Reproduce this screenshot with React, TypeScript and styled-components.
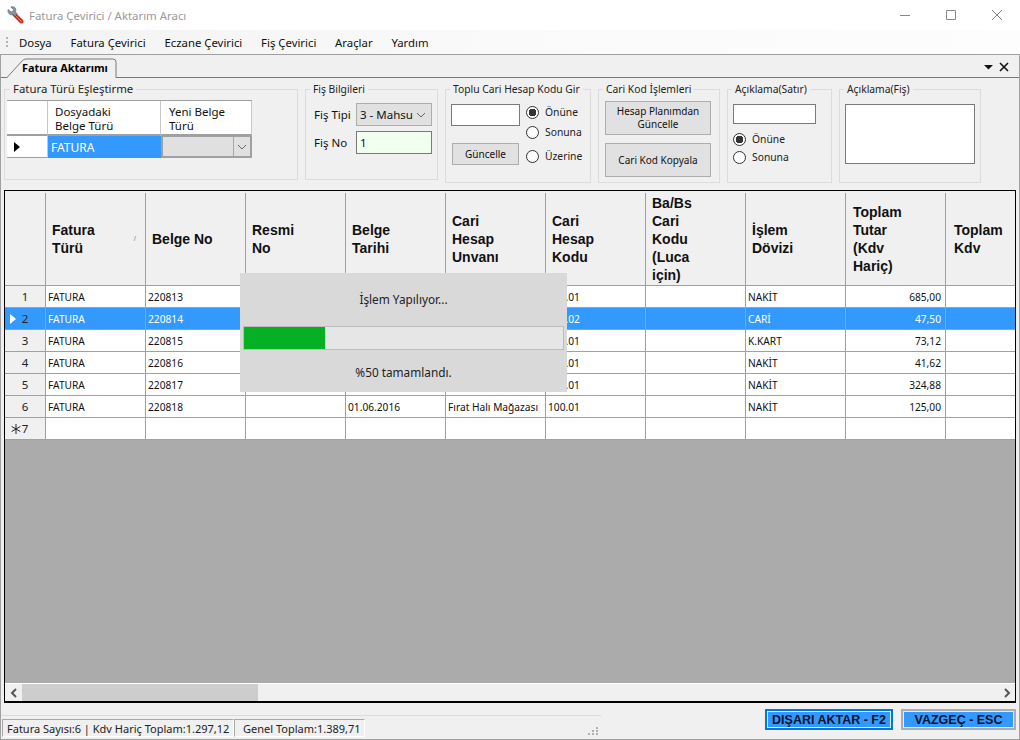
import React from "react";
import styled, { createGlobalStyle } from "styled-components";

const UI_FONT = `"Noto Sans", "Open Sans", sans-serif`;

const Global = createGlobalStyle`
  html, body { margin: 0; padding: 0; background: #f0f0f0; }
  * { box-sizing: border-box; }
`;

const Window = styled.div`
  width: 1020px;
  height: 740px;
  display: flex;
  flex-direction: column;
  background: #f0f0f0;
  border-bottom: 1px solid #a0a0a0;
  font-family: ${UI_FONT};
  font-size: 11px;
  color: #111;
  overflow: hidden;
`;

const TitleBar = styled.div`
  height: 30px;
  flex: none;
  display: flex;
  align-items: center;
  background: #fff;
  padding-left: 7px;
`;

const TitleText = styled.span`
  margin-left: 5px;
  font-size: 11.4px;
  color: #9a9a9a;
  flex: 1;
`;

const WinButtons = styled.div`
  display: flex;
  width: 138px;
`;

const WinButton = styled.svg`
  width: 46px;
  height: 12px;
  stroke: #888;
  fill: none;
`;

const MenuBar = styled.div`
  height: 25px;
  flex: none;
  display: flex;
  align-items: center;
  padding-left: 6px;
  background: linear-gradient(90deg, #f3f3f3, #fbfbfb 60%, #fdfdfd);
  border-bottom: 1px solid #a0a0a0;
`;

const Grip = styled.svg`
  width: 3px;
  height: 11px;
  margin-right: 10px;
  fill: #b4b4b4;
`;

const MenuItem = styled.span`
  font-size: 11.35px;
  margin-right: 18.8px;
  color: #111;
`;

const Body = styled.div`
  flex: 1;
  min-height: 0;
  display: flex;
  flex-direction: column;
  border-left: 1px solid #a0a0a0;
  border-right: 1px solid #a0a0a0;
`;

const TabStrip = styled.div`
  height: 23px;
  flex: none;
  display: flex;
  align-items: flex-end;
  justify-content: space-between;
  padding-left: 5px;
  border-bottom: 1px solid #777;
`;

const Tab = styled.div`
  position: relative;
  width: 110px;
  height: 20px;
  margin-bottom: -1px;
  padding: 2px 0 0 16px;
  font-size: 10.9px;
  line-height: 16px;
  font-weight: 700;
  color: #000;
`;

const TabShape = styled.svg`
  position: absolute;
  left: 0;
  top: 0;
  z-index: 0;
`;

const TabLabel = styled.span`
  position: relative;
`;

const TabTools = styled.svg`
  width: 30px;
  height: 12px;
  margin: 0 5px 4px 0;
`;

const Filters = styled.div`
  height: 112px;
  flex: none;
  display: flex;
  align-items: flex-start;
  gap: 7px;
  padding: 4px 0 0 3px;
`;

const Group = styled.fieldset<{ $w: number; $short?: boolean }>`
  width: ${(p) => p.$w}px;
  height: ${(p) => (p.$short ? 98 : 101)}px;
  margin: 0;
  padding: 0;
  min-width: 0;
  border: 1px solid #dcdcdc;
`;

const GroupTitle = styled.legend<{ $big?: boolean }>`
  margin-left: ${(p) => (p.$big ? 5 : 4)}px;
  padding: 0 3px;
  font-size: ${(p) => (p.$big ? 11.4 : 10.3)}px;
  line-height: 14px;
  color: #222;
  white-space: nowrap;
`;

/* file type mapping */
const MapTable = styled.div`
  margin: 4px 0 0 2px;
  width: 245px;
  display: grid;
  grid-template-columns: 41px 113px 91px;
  grid-template-rows: 35px 22px;
  background: #fff;
  border-top: 1px solid #a0a0a0;
`;

const MapHead = styled.div<{ $pad?: number }>`
  padding: 4px 0 0 ${(p) => p.$pad ?? 7}px;
  font-size: 11.5px;
  line-height: 14px;
  border-right: 1px solid #c8c8c8;
  border-bottom: 2px solid #a0a0a0;
`;

const MapMarker = styled.div`
  display: flex;
  align-items: center;
  padding-left: 7px;
  border-right: 1px solid #c8c8c8;
  border-bottom: 1px solid #a0a0a0;
`;

const MapValue = styled.div`
  display: flex;
  align-items: center;
  padding-left: 3px;
  font-size: 12px;
  background: #3399ff;
  color: #fff;
`;

const MapCombo = styled.div`
  display: flex;
  justify-content: flex-end;
  align-items: center;
  background: #e0e0e0;
  border: 2px solid #a0a0a0;
  border-top-width: 1px;
`;

const ComboArrow = styled.span`
  width: 17px;
  height: 100%;
  display: flex;
  align-items: center;
  justify-content: center;
  border-left: 1px solid #a8a8a8;
`;

/* voucher info */
const VoucherForm = styled.div`
  display: grid;
  grid-template-columns: 42px 76px;
  grid-template-rows: 23px 23px;
  row-gap: 5px;
  align-items: center;
  padding: 7px 0 0 8px;
  font-size: 11.5px;
`;

const SelectBox = styled.div`
  height: 23px;
  display: flex;
  align-items: center;
  justify-content: space-between;
  padding: 0 5px 0 3px;
  font-size: 11.5px;
  background: #e1e1e1;
  border: 1px solid #adadad;
  white-space: nowrap;
  overflow: hidden;
`;

const TextBox = styled.input<{ $w: number; $h: number; $tint?: string }>`
  display: block;
  width: ${(p) => p.$w}px;
  height: ${(p) => p.$h}px;
  padding: 0 3px;
  font-family: inherit;
  font-size: 11.5px;
  color: #111;
  background: ${(p) => p.$tint ?? "#fff"};
  border: 1px solid #7a7a7a;
  outline: none;
`;

const NoteBox = styled.textarea`
  display: block;
  width: 130px;
  height: 60px;
  margin: 8px 0 0 5px;
  background: #fff;
  border: 1px solid #7a7a7a;
  resize: none;
  outline: none;
`;

const PushButton = styled.div<{ $w: number; $h: number }>`
  width: ${(p) => p.$w}px;
  height: ${(p) => p.$h}px;
  display: flex;
  align-items: center;
  justify-content: center;
  text-align: center;
  font-size: 10px;
  line-height: 13px;
  color: #111;
  background: #e1e1e1;
  border: 1px solid #adadad;
`;

const BulkLayout = styled.div`
  display: flex;
  padding-left: 5px;
`;

const BulkLeft = styled.div`
  width: 75px;
  padding-top: 8px;
  display: flex;
  flex-direction: column;
  gap: 17px;
`;

const BulkButton = styled.div`
  margin-left: 1px;
`;

const RadioCol = styled.div`
  padding-top: 6px;
`;

const RadioRow = styled.label<{ $h?: number; $top?: number }>`
  height: ${(p) => p.$h ?? 20}px;
  margin-top: ${(p) => p.$top ?? 0}px;
  display: flex;
  align-items: center;
  gap: 6px;
  font-size: 10.3px;
  color: #222;
`;

const Radio = styled.span<{ $on?: boolean }>`
  width: 13px;
  height: 13px;
  flex: none;
  border-radius: 50%;
  border: 1px solid #333;
  background: ${(p) =>
    p.$on ? "radial-gradient(circle, #333 0 3.6px, #fff 4px)" : "#fff"};
`;

const ButtonStack = styled.div`
  display: flex;
  flex-direction: column;
  gap: 8px;
  padding: 5px 0 0 6px;
`;

const NoteLayout = styled.div`
  padding: 8px 0 0 5px;
`;

const NoteRadios = styled.div`
  padding-top: 6px;
`;

/* data grid */
const GridFrame = styled.div`
  position: relative;
  flex: 1;
  min-height: 0;
  margin: 0 3px;
  display: flex;
  flex-direction: column;
  border: 1px solid #000;
  border-width: 1px 1px 2px 1px;
  background: #ababab;
  overflow: hidden;
`;

const Columns = "41px repeat(8, 100px) 100px 100px";

const HeaderRow = styled.div`
  height: 95px;
  flex: none;
  display: grid;
  grid-template-columns: ${Columns};
  background: #f0f0f0;
  border-bottom: 1px solid #a0a0a0;
`;

const HeaderCell = styled.div<{ $pad?: number }>`
  position: relative;
  margin-top: 2px;
  display: flex;
  align-items: center;
  padding-left: ${(p) => p.$pad ?? 6}px;
  font-family: "Liberation Sans", Arial, sans-serif;
  font-size: 14px;
  line-height: 18px;
  font-weight: 700;
  color: #111;
  border-right: 1px solid #a0a0a0;
`;

const SortMark = styled.span`
  position: absolute;
  right: 9px;
  top: 42px;
  font-size: 8px;
  line-height: 8px;
  font-weight: 400;
  color: #888;
`;

const DataRow = styled.div<{ $sel?: boolean }>`
  height: 22px;
  flex: none;
  display: grid;
  grid-template-columns: ${Columns};
  background: ${(p) => (p.$sel ? "#3399ff" : "#fff")};
  color: ${(p) => (p.$sel ? "#fff" : "#111")};
  border-bottom: 1px solid #a0a0a0;
`;

const RowHead = styled.div<{ $sel?: boolean }>`
  position: relative;
  display: flex;
  align-items: center;
  justify-content: center;
  font-size: 11.5px;
  color: #222;
  background: ${(p) => (p.$sel ? "#3399ff" : "#f0f0f0")};
  border-right: 1px solid #a0a0a0;
`;

const RowMark = styled.span<{ $left: number }>`
  position: absolute;
  left: ${(p) => p.$left}px;
  top: 50%;
  transform: translateY(-50%);
  display: flex;
`;

const Cell = styled.div<{ $right?: boolean }>`
  display: flex;
  align-items: center;
  justify-content: ${(p) => (p.$right ? "flex-end" : "flex-start")};
  padding: ${(p) => (p.$right ? "0 4px 0 0" : "0 0 0 2px")};
  font-size: 10.2px;
  white-space: nowrap;
  overflow: hidden;
  border-right: 1px solid #a0a0a0;
`;

const EmptyArea = styled.div`
  flex: 1;
  background: #ababab;
  border-bottom: 1px solid #fff;
`;

const HScroll = styled.div`
  height: 17px;
  flex: none;
  display: flex;
  align-items: stretch;
  background: #f0f0f0;
`;

const ScrollEnd = styled.div`
  width: 17px;
  flex: none;
  display: flex;
  align-items: center;
  justify-content: center;
`;

const ScrollTrack = styled.div`
  flex: 1;
  padding-right: 740px;
`;

const ScrollThumb = styled.div`
  height: 100%;
  background: #cdcdcd;
`;

/* progress popup */
const ProgressPanel = styled.div`
  position: absolute;
  left: 235px;
  top: 82px;
  width: 327px;
  height: 119px;
  display: flex;
  flex-direction: column;
  align-items: center;
  background: #d9d9d9;
  padding: 0 3px;
  font-size: 11.8px;
  color: #222;
`;

const ProgressTitle = styled.div`
  height: 53px;
  padding-bottom: 2px;
  display: flex;
  align-items: center;
`;

const ProgressTrack = styled.div`
  width: 100%;
  height: 24px;
  flex: none;
  background: #e6e6e6;
  border: 1px solid #bcbcbc;
`;

const ProgressFill = styled.div`
  height: 100%;
  background: #06b025;
`;

const ProgressNote = styled.div`
  flex: 1;
  padding-top: 2px;
  display: flex;
  align-items: center;
`;

/* footer */
const Footer = styled.div`
  height: 36px;
  flex: none;
  display: flex;
  justify-content: space-between;
  padding-right: 3px;
`;

const StatusStrip = styled.div`
  position: relative;
  width: 600px;
  height: 24px;
  margin-top: 12px;
  display: flex;
  align-items: flex-start;
  padding: 3px 0 0 1px;
  border-top: 1px solid #dcdcdc;
`;

const StatusPane = styled.div<{ $w: number; $pad: number }>`
  width: ${(p) => p.$w}px;
  height: 18px;
  display: flex;
  align-items: center;
  padding-left: ${(p) => p.$pad}px;
  font-size: 11px;
  white-space: nowrap;
  color: #222;
  border: 1px solid;
  border-color: #a8a8a8 #fff #fff #a8a8a8;
`;

const ResizeGrip = styled.svg`
  position: absolute;
  right: 2px;
  bottom: 3px;
  fill: #b0b0b0;
`;

const FooterButtons = styled.div`
  display: flex;
  gap: 8px;
  padding-top: 6px;
`;

const ActionButton = styled.div<{ $w: number; $focus?: boolean }>`
  width: ${(p) => p.$w}px;
  height: 21px;
  display: flex;
  align-items: center;
  justify-content: center;
  font-family: "Liberation Sans", Arial, sans-serif;
  font-size: 12.5px;
  font-weight: 700;
  color: #06122a;
  background: #3399ff;
  border: 2px solid ${(p) => (p.$focus ? "#0078d7" : "#adadad")};
  box-shadow: inset 0 0 0 1px ${(p) => (p.$focus ? "#dbeeff" : "#e8e8e8")};
`;

const Chevron = ({ dir }: { dir: "down" | "left" | "right" }) => {
  const d = {
    down: "M1 1l4 4 4-4",
    left: "M6 1L2 5l4 4",
    right: "M2 1l4 4-4 4",
  }[dir];
  const strong = dir !== "down";
  return (
    <svg width={dir === "down" ? 10 : 8} height={dir === "down" ? 6 : 10} fill="none">
      <path d={d} stroke={strong ? "#555" : "#666"} strokeWidth={strong ? 2 : 1} />
    </svg>
  );
};

const WrenchIcon = () => (
  <svg width="17" height="18" viewBox="0 0 17 18">
    <path d="M7 8l7.5 7.5" stroke="#c9301e" strokeWidth="4" strokeLinecap="round" />
    <path d="M7.5 8.5l7 7" stroke="#f0806a" strokeWidth="1" strokeLinecap="round" />
    <path
      d="M1 3.5L4 6l2-.6.5-2L3.8 1C6 0 8.6 1.200 8.800 3.600c.1 1-.1 1.700-.4 2.300L10 7.500 7.500 10 5.800 8.400c-.8.300-1.600.4-2.400.2C1.500 8.100.6 5.500 1 3.500z"
      fill="#8b95a1"
      stroke="#555c66"
      strokeWidth=".6"
    />
  </svg>
);

const RightTriangle = ({ fill }: { fill: string }) => (
  <svg width="6" height="10">
    <path d="M0 0l6 5-6 5z" fill={fill} />
  </svg>
);

const headers = [
  ["Fatura", "Türü"],
  ["Belge No"],
  ["Resmi", "No"],
  ["Belge", "Tarihi"],
  ["Cari", "Hesap", "Unvanı"],
  ["Cari", "Hesap", "Kodu"],
  ["Ba/Bs", "Cari", "Kodu", "(Luca", "için)"],
  ["İşlem", "Dövizi"],
  ["Toplam", "Tutar", "(Kdv", "Hariç)"],
  ["Toplam", "Kdv"],
];

const rows = [
  { no: "220813", code: "100.01", cur: "NAKİT", total: "685,00" },
  { no: "220814", code: "100.02", cur: "CARİ", total: "47,50", sel: true },
  { no: "220815", code: "100.01", cur: "K.KART", total: "73,12" },
  { no: "220816", code: "100.01", cur: "NAKİT", total: "41,62" },
  { no: "220817", code: "100.01", cur: "NAKİT", total: "324,88", kdv: "25,99" },
  {
    no: "220818",
    date: "01.06.2016",
    title: "Fırat Halı Mağazası",
    code: "100.01",
    cur: "NAKİT",
    total: "125,00",
  },
];

export default function App() {
  return (
    <Window>
      <Global />
      <TitleBar>
        <WrenchIcon />
        <TitleText>Fatura Çevirici / Aktarım Aracı</TitleText>
        <WinButtons>
          <WinButton viewBox="0 0 46 12">
            <path d="M18 6.500h10" />
          </WinButton>
          <WinButton viewBox="0 0 46 12">
            <path d="M18.500 1.500h9v9h-9z" />
          </WinButton>
          <WinButton viewBox="0 0 46 12">
            <path d="M18 1l10 10M28 1L18 11" />
          </WinButton>
        </WinButtons>
      </TitleBar>

      <MenuBar>
        <Grip viewBox="0 0 3 11">
          <path d="M0 0h2v2H0zM0 4h2v2H0zM0 8h2v2H0z" />
        </Grip>
        {["Dosya", "Fatura Çevirici", "Eczane Çevirici", "Fiş Çevirici", "Araçlar", "Yardım"].map(
          (m) => (
            <MenuItem key={m}>{m}</MenuItem>
          )
        )}
      </MenuBar>

      <Body>
        <TabStrip>
          <Tab>
            <TabShape width="111" height="20">
              <path
                d="M0.500 20L16.500 2.500Q18 1 20 1H107Q110 1 110 4V20"
                fill="#f0f0f0"
                stroke="#7a7a7a"
              />
            </TabShape>
            <TabLabel>Fatura Aktarımı</TabLabel>
          </Tab>
          <TabTools viewBox="0 0 30 12">
            <path d="M0 4h9L4.500 8.500z" fill="#111" />
            <path d="M16 2l8 8M24 2l-8 8" stroke="#111" strokeWidth="1.600" fill="none" />
          </TabTools>
        </TabStrip>

        <Filters>
          <Group $w={294} $short>
            <GroupTitle $big>Fatura Türü Eşleştirme</GroupTitle>
            <MapTable>
              <MapHead />
              <MapHead>
                Dosyadaki
                <br />
                Belge Türü
              </MapHead>
              <MapHead $pad={8}>
                Yeni Belge
                <br />
                Türü
              </MapHead>
              <MapMarker>
                <RightTriangle fill="#000" />
              </MapMarker>
              <MapValue>FATURA</MapValue>
              <MapCombo>
                <ComboArrow>
                  <Chevron dir="down" />
                </ComboArrow>
              </MapCombo>
            </MapTable>
          </Group>

          <Group $w={133} $short>
            <GroupTitle>Fiş Bilgileri</GroupTitle>
            <VoucherForm>
              <span>Fiş Tipi</span>
              <SelectBox>
                3 - Mahsu
                <Chevron dir="down" />
              </SelectBox>
              <span>Fiş No</span>
              <TextBox $w={76} $h={23} $tint="#f0fff0" defaultValue="1" readOnly />
            </VoucherForm>
          </Group>

          <Group $w={146}>
            <GroupTitle>Toplu Cari Hesap Kodu Gir</GroupTitle>
            <BulkLayout>
              <BulkLeft>
                <TextBox $w={69} $h={22} readOnly />
                <BulkButton>
                  <PushButton $w={67} $h={22}>
                    Güncelle
                  </PushButton>
                </BulkButton>
              </BulkLeft>
              <RadioCol>
                <RadioRow>
                  <Radio $on />
                  Önüne
                </RadioRow>
                <RadioRow>
                  <Radio />
                  Sonuna
                </RadioRow>
                <RadioRow $top={4}>
                  <Radio />
                  Üzerine
                </RadioRow>
              </RadioCol>
            </BulkLayout>
          </Group>

          <Group $w={122}>
            <GroupTitle>Cari Kod İşlemleri</GroupTitle>
            <ButtonStack>
              <PushButton $w={106} $h={34}>
                Hesap Planımdan
                <br />
                Güncelle
              </PushButton>
              <PushButton $w={106} $h={34}>
                Cari Kod Kopyala
              </PushButton>
            </ButtonStack>
          </Group>

          <Group $w={105}>
            <GroupTitle>Açıklama(Satır)</GroupTitle>
            <NoteLayout>
              <TextBox $w={83} $h={20} readOnly />
              <NoteRadios>
                <RadioRow $h={18}>
                  <Radio $on />
                  Önüne
                </RadioRow>
                <RadioRow $h={18}>
                  <Radio />
                  Sonuna
                </RadioRow>
              </NoteRadios>
            </NoteLayout>
          </Group>

          <Group $w={142}>
            <GroupTitle>Açıklama(Fiş)</GroupTitle>
            <NoteBox readOnly />
          </Group>
        </Filters>

        <GridFrame>
          <HeaderRow>
            <HeaderCell />
            {headers.map((lines, i) => (
              <HeaderCell key={i} $pad={i === 9 ? 8 : i === 8 ? 7 : 6}>
                <div>
                  {lines.map((l) => (
                    <div key={l}>{l}</div>
                  ))}
                </div>
                {i === 0 && <SortMark>/</SortMark>}
              </HeaderCell>
            ))}
          </HeaderRow>

          {rows.map((r, i) => (
            <DataRow key={r.no} $sel={r.sel}>
              <RowHead $sel={r.sel}>
                {r.sel && (
                  <RowMark $left={5}>
                    <RightTriangle fill="#fff" />
                  </RowMark>
                )}
                {i + 1}
              </RowHead>
              <Cell>FATURA</Cell>
              <Cell>{r.no}</Cell>
              <Cell />
              <Cell>{r.date}</Cell>
              <Cell>{r.title}</Cell>
              <Cell>{r.code}</Cell>
              <Cell />
              <Cell>{r.cur}</Cell>
              <Cell $right>{r.total}</Cell>
              <Cell $right>{r.kdv}</Cell>
            </DataRow>
          ))}
          <DataRow>
            <RowHead>
              <RowMark $left={6}>
                <svg width="10" height="10" viewBox="0 0 11 11">
                  <path
                    d="M5.500 0v11M0.700 2.700l9.600 5.600M0.700 8.300l9.600-5.600"
                    stroke="#222"
                    strokeWidth="1.100"
                  />
                </svg>
              </RowMark>
              7
            </RowHead>
            {Array.from({ length: 10 }, (_, i) => (
              <Cell key={i} />
            ))}
          </DataRow>

          <EmptyArea />

          <HScroll>
            <ScrollEnd>
              <Chevron dir="left" />
            </ScrollEnd>
            <ScrollTrack>
              <ScrollThumb />
            </ScrollTrack>
            <ScrollEnd>
              <Chevron dir="right" />
            </ScrollEnd>
          </HScroll>

          <ProgressPanel>
            <ProgressTitle>İşlem Yapılıyor...</ProgressTitle>
            <ProgressTrack>
              <ProgressFill style={{ width: `${(81 / 319) * 100}%` }} />
            </ProgressTrack>
            <ProgressNote>%50 tamamlandı.</ProgressNote>
          </ProgressPanel>
        </GridFrame>

        <Footer>
          <StatusStrip>
            <StatusPane $w={232} $pad={4}>
              Fatura Sayısı:6 | Kdv Hariç Toplam:1.297,12
            </StatusPane>
            <StatusPane $w={131} $pad={8}>
              Genel Toplam:1.389,71
            </StatusPane>
            <ResizeGrip width="11" height="9" viewBox="0 0 11 9">
              <path d="M8 0h2v2H8zM4 3h2v2H4zM8 3h2v2H8zM0 6h2v2H0zM4 6h2v2H4zM8 6h2v2H8z" />
            </ResizeGrip>
          </StatusStrip>
          <FooterButtons>
            <ActionButton $w={128} $focus>
              DIŞARI AKTAR - F2
            </ActionButton>
            <ActionButton $w={115}>VAZGEÇ - ESC</ActionButton>
          </FooterButtons>
        </Footer>
      </Body>
    </Window>
  );
}
